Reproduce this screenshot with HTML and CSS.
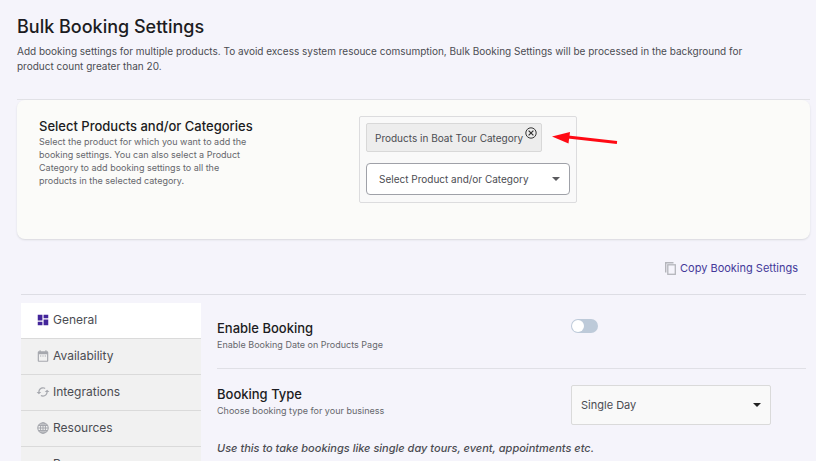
FILE: index.html
```html
<!DOCTYPE html>
<html lang="en">
<head>
<meta charset="utf-8">
<meta name="viewport" content="width=device-width, initial-scale=1">
<title>Bulk Booking Settings</title>
<link rel="stylesheet" href="styles.css">
</head>
<body>
<main class="page">
  <header class="page-header">
    <h1>Bulk Booking Settings</h1>
    <p>Add booking settings for multiple products. To avoid excess system resouce comsumption, Bulk Booking Settings will be processed in the background for product count greater than 20.</p>
  </header>

  <section class="card">
    <div class="card-text">
      <h2 id="products-title">Select Products and/or Categories</h2>
      <p class="hint">Select the product for which you want to add the booking settings. You can also select a Product Category to add booking settings to all the products in the selected category.</p>
    </div>
    <div class="picker">
      <div class="chip">
        <span>Products in Boat Tour Category</span>
        <button type="button" class="chip-remove" aria-label="Remove">
          <svg viewBox="0 0 12 12" width="12" height="12" fill="none" stroke="#333"><circle cx="6" cy="6" r="5.2"/><path d="M3.6 3.6l4.8 4.8M8.4 3.6L3.6 8.4" stroke-width="1.2"/></svg>
        </button>
      </div>
      <div class="select-wrap">
        <select class="select-product" aria-labelledby="products-title">
          <option>Select Product and/or Category</option>
        </select>
        <svg class="caret caret-soft" viewBox="0 0 8 4" width="8" height="4"><path d="M0 0h8L4 4z" fill="currentColor"/></svg>
      </div>
      <svg class="arrow" viewBox="0 0 66 14" width="66" height="14"><path d="M16 5L65 10.5" stroke="#ff0a14" stroke-width="2.8" fill="none"/><path d="M0 4.5L18 0L16.500 11.500z" fill="#ff0a14"/></svg>
    </div>
  </section>

  <div class="copy-row">
    <a href="#copy" class="copy-link">
      <svg viewBox="0 0 11 13" width="11" height="13" fill="none" stroke="#b4b5bb"><path d="M.7 10.500V.7H8.500" stroke-width="1.400"/><rect x="2.800" y="2.800" width="7.500" height="9.500" stroke-width="1.300"/></svg>
      Copy Booking Settings
    </a>
  </div>

  <div class="settings">
    <nav class="tabs">
      <a href="#general" class="tab active">
        <svg viewBox="0 0 24 24" width="14" height="14"><path fill="currentColor" d="M3 13h8V3H3v10zm0 8h8v-6H3v6zm10 0h8V11h-8v10zm0-18v6h8V3h-8z"/></svg>
        General
      </a>
      <a href="#availability" class="tab">
        <svg viewBox="0 0 24 24" width="14" height="14"><path fill="currentColor" d="M9 11H7v2h2v-2zm4 0h-2v2h2v-2zm4 0h-2v2h2v-2zm2-7h-1V2h-2v2H8V2H6v2H5c-1.110 0-1.990.9-1.990 2L3 20c0 1.100.89 2 2 2h14c1.100 0 2-.9 2-2V6c0-1.100-.9-2-2-2zm0 16H5V9h14v11z"/></svg>
        Availability
      </a>
      <a href="#integrations" class="tab">
        <svg viewBox="0 0 24 24" width="14" height="14"><path fill="currentColor" d="M19 8l-4 4h3c0 3.310-2.690 6-6 6-1.010 0-1.970-.25-2.800-.7l-1.460 1.460C8.970 19.540 10.430 20 12 20c4.420 0 8-3.580 8-8h3l-4-4zM6 12c0-3.310 2.690-6 6-6 1.010 0 1.970.25 2.800.7l1.460-1.460C15.030 4.460 13.570 4 12 4c-4.420 0-8 3.580-8 8H1l4 4 4-4H6z"/></svg>
        Integrations
      </a>
      <a href="#resources" class="tab">
        <svg viewBox="0 0 24 24" width="14" height="14" fill="none" stroke="currentColor" stroke-width="1.800"><circle cx="12" cy="12" r="9"/><ellipse cx="12" cy="12" rx="4.300" ry="9"/><path d="M12 3v18M3 12h18M4.500 7.500h15M4.500 16.500h15"/></svg>
        Resources
      </a>
      <a href="#persons" class="tab">
        <svg viewBox="0 0 24 24" width="14" height="14"><path fill="currentColor" d="M12 14a3.500 3.500 0 1 0 0-7 3.500 3.500 0 0 0 0 7zm-7 7c0-3 3.500-5 7-5s7 2 7 5z"/></svg>
        Persons
      </a>
    </nav>

    <div class="panel">
      <div class="row row-line">
        <div class="row-text">
          <h2><label for="enable">Enable Booking</label></h2>
          <p class="hint">Enable Booking Date on Products Page</p>
        </div>
        <div class="row-control"><input type="checkbox" role="switch" id="enable" class="switch"></div>
      </div>
      <div class="row">
        <div class="row-text">
          <h2><label for="type">Booking Type</label></h2>
          <p class="hint">Choose booking type for your business</p>
        </div>
        <div class="row-control">
          <div class="select-wrap">
            <select id="type" class="select-type"><option>Single Day</option></select>
            <svg class="caret" viewBox="0 0 8 4" width="8" height="4"><path d="M0 0h8L4 4z" fill="currentColor"/></svg>
          </div>
        </div>
      </div>
      <p class="note">Use this to take bookings like single day tours, event, appointments etc.</p>
    </div>
  </div>
</main>
</body>
</html>
```
FILE: styles.css
```css
* {
  box-sizing: border-box;
}

body {
  margin: 0;
  background: #f5f4fb;
  color: #4b4c52;
  font-family: Inter, "Liberation Sans", sans-serif;
  font-size: 12px;
}

h1, h2, p {
  margin: 0;
}

.page {
  padding: 16px 6px 0 17px;
}

h1 {
  color: #1c1c22;
  font-size: 18px;
  font-weight: 500;
  line-height: 22px;
}

h2 {
  color: #1c1c22;
  font-size: 13px;
  font-weight: 500;
  line-height: 18px;
}

.page-header {
  padding-bottom: 25px;
  border-bottom: 1px solid #e2e2e6;
}

.page-header p {
  margin-top: 6px;
  padding-right: 40px;
  font-size: 10px;
  line-height: 15px;
}

.hint {
  color: #66676c;
  font-size: 9px;
  line-height: 13px;
}

.card {
  display: flex;
  gap: 104px;
  min-height: 139px;
  padding: 16px 22px;
  border-radius: 8px;
  background: #fbfbf9;
  box-shadow: 0 1px 2px #d8d8de;
}

.card-text {
  flex: 0 0 216px;
  padding-top: 1px;
}

.card-text h2 {
  white-space: nowrap;
}

.card-text .hint {
  max-width: 210px;
}

.picker {
  position: relative;
  align-self: flex-start;
  width: 218px;
  padding: 6px 6px 7px;
  border: 1px solid #dcdcde;
  border-radius: 2px;
  background: #f9f9f9;
}

.chip {
  display: flex;
  align-items: center;
  gap: 2px;
  width: max-content;
  height: 29px;
  padding: 0 4px 0 8px;
  border: 1px solid #d8d8d8;
  border-radius: 2px;
  background: #ededed;
  font-size: 10px;
  white-space: nowrap;
}

.chip-remove {
  display: flex;
  align-self: flex-start;
  padding: 3px 0 0;
  border: 0;
  background: none;
}

.select-wrap {
  position: relative;
}

.picker .select-wrap {
  margin-top: 11px;
}

select {
  display: block;
  width: 100%;
  appearance: none;
  color: #4b4c52;
  font-family: inherit;
}

.select-product {
  height: 32px;
  padding: 0 30px 0 12px;
  border: 1px solid #9fa1a8;
  border-radius: 4px;
  background: #fff;
  font-size: 10px;
}

.select-type {
  height: 40px;
  padding: 0 30px 0 9px;
  border: 1px solid #dadada;
  border-radius: 2px;
  background: #f9f9f9;
  font-size: 11px;
}

.caret {
  position: absolute;
  top: 50%;
  right: 10px;
  margin-top: -2px;
  color: #222;
  pointer-events: none;
}

.caret-soft {
  color: #5a5a5e;
}

.arrow {
  position: absolute;
  top: 15px;
  left: 192px;
}

.copy-row {
  display: flex;
  justify-content: flex-end;
  padding: 21px 12px 18px;
}

.copy-link {
  display: flex;
  align-items: center;
  gap: 4px;
  color: #44399a;
  font-size: 11px;
  line-height: 16px;
  text-decoration: none;
}

.settings {
  display: flex;
  gap: 16px;
  margin: 0 4px;
  padding-top: 8px;
  border-top: 1px solid #dddde4;
}

.tabs {
  flex: 0 0 180px;
}

.tab {
  display: flex;
  align-items: center;
  gap: 3px;
  height: 36px;
  padding: 0 0 2px 15px;
  border-bottom: 1px solid #dadada;
  background: #f1f1f1;
  color: #4b4c52;
  font-size: 12px;
  text-decoration: none;
}

.tab svg {
  color: #a6a8ae;
}

.tab.active {
  background: #fff;
}

.tab.active svg {
  color: #43259a;
}

.panel {
  flex: 1;
}

.row {
  display: flex;
  padding-top: 16px;
}

.row-line {
  padding-bottom: 17px;
  border-bottom: 1px solid #e0e0e6;
}

.row-text {
  flex: 0 0 354px;
}

.row-text .hint {
  margin-top: 1px;
}

.row-control {
  flex: 0 1 200px;
}

.switch {
  display: block;
  width: 27px;
  height: 14px;
  margin: 0;
  padding: 1px;
  appearance: none;
  border-radius: 7px;
  background: #bdcad9;
}

.switch::before {
  display: block;
  width: 12px;
  height: 12px;
  border-radius: 50%;
  background: #fff;
  content: "";
}

.switch:checked {
  background: #43259a;
}

.note {
  margin-top: 16px;
  font-size: 11px;
  font-style: italic;
  font-weight: 500;
  line-height: 14px;
}
```
